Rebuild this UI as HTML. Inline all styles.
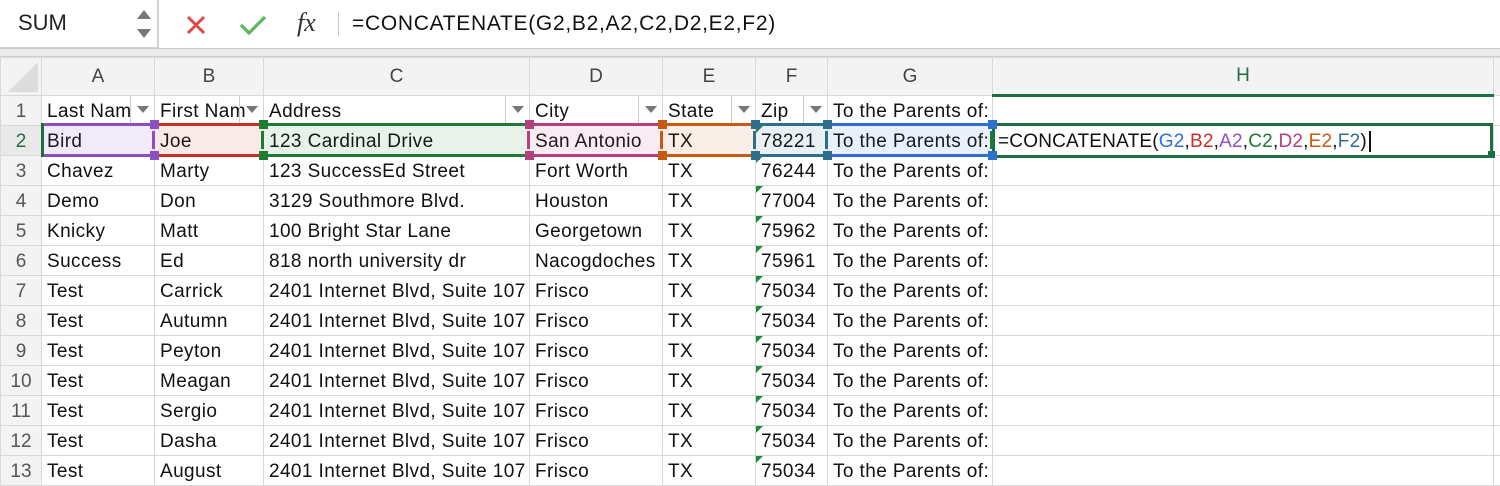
<!DOCTYPE html>
<html><head><meta charset="utf-8"><style>
*{margin:0;padding:0;box-sizing:border-box}
body{width:1500px;height:484px;overflow:hidden;background:#fff;font-family:"Liberation Sans",Arial,sans-serif;position:relative}
.a{position:absolute}
#fb{left:0;top:0;width:1500px;height:49px;background:#fff;border-bottom:1px solid #c8c8c8}
#band{left:0;top:49px;width:1500px;height:8px;background:#ececec;border-bottom:1px solid #cfcfcf}
table{position:absolute;left:0;top:57px;width:1513px;border-collapse:collapse;table-layout:fixed;font-size:19px;letter-spacing:.4px}
td{border:1px solid #d6d6d6;height:30px;padding:3px 0 0 5px;white-space:nowrap;overflow:hidden;color:#111;line-height:26px;position:relative}
tr.h td{height:38px;background:#f3f3f3;color:#444;text-align:center;padding:0;border-color:#d9d9d9;letter-spacing:0}
td.r{background:#f3f3f3;color:#555;text-align:center;padding:3px 0 0 0;border-color:#d9d9d9;letter-spacing:0}
.dd{position:absolute;right:0;top:0;width:24px;height:28px;border-left:1px solid #ccc}
.dd:after{content:"";position:absolute;left:6px;top:10px;border-left:6px solid transparent;border-right:6px solid transparent;border-top:7px solid #777}
.tri{position:absolute;left:0;top:0;width:0;height:0;border-top:7px solid #1c8a3a;border-right:7px solid transparent}
.box{position:absolute;top:123px;height:34px;border-top:3px solid;border-bottom:3px solid}
.sq{position:absolute;width:9px;height:9px}
</style></head><body>
<div id="fb" class="a">
 <div class="a" style="left:0;top:0;width:159px;height:48px;border-right:2px solid #d0d0d0;border-bottom:1px solid #d0d0d0"></div>
 <div class="a" style="left:18px;top:10px;font-size:22px;color:#222">SUM</div>
 <div class="a" style="left:137px;top:10px;border-left:7px solid transparent;border-right:7px solid transparent;border-bottom:9px solid #777"></div>
 <div class="a" style="left:137px;top:29px;border-left:7px solid transparent;border-right:7px solid transparent;border-top:9px solid #777"></div>
 <svg class="a" style="left:185px;top:14px" width="22" height="22"><path d="M3 3L19 19M19 3L3 19" stroke="#e04848" stroke-width="3"/></svg>
 <svg class="a" style="left:238px;top:13px" width="30" height="24"><path d="M3 12L11 20L27 4" stroke="#5cb85c" stroke-width="3.2" fill="none"/></svg>
 <div class="a" style="left:297px;top:8px;font-family:'Liberation Serif',serif;font-style:italic;font-size:26px;color:#333">fx</div>
 <div class="a" style="left:338px;top:12px;width:1px;height:24px;background:#ccc"></div>
 <div class="a" style="left:352px;top:12px;font-size:21px;letter-spacing:.7px;color:#111">=CONCATENATE(G2,B2,A2,C2,D2,E2,F2)</div>
</div>
<div id="band" class="a"></div>
<table>
<colgroup><col style="width:41px"><col style="width:113px"><col style="width:109px"><col style="width:266px"><col style="width:133px"><col style="width:93px"><col style="width:72px"><col style="width:165px"><col style="width:501px"><col style="width:20px"></colgroup>
<tr class="h"><td style="position:relative"><div class="a" style="right:3px;bottom:3px;width:0;height:0;border-left:30px solid transparent;border-bottom:30px solid #dcdcdc"></div></td><td>A</td><td>B</td><td>C</td><td>D</td><td>E</td><td>F</td><td>G</td><td style="color:#1e6e42;border-bottom:3px solid #1e6e42">H</td><td></td></tr>
<tr><td class="r">1</td><td>Last Nam<span class="dd"></span></td><td>First Nam<span class="dd"></span></td><td>Address<span class="dd"></span></td><td>City<span class="dd"></span></td><td>State<span class="dd"></span></td><td>Zip<span class="dd"></span></td><td>To the Parents of:</td><td></td><td></td></tr>
<tr><td class="r" style="color:#1e6e42;background:#e9e9e9">2</td><td>Bird</td><td>Joe</td><td>123 Cardinal Drive</td><td>San Antonio</td><td>TX</td><td><span class="tri"></span>78221</td><td>To the Parents of:</td><td style="padding-left:5px;letter-spacing:.2px">=CONCATENATE(<span style="color:#2f6fd0">G2</span>,<span style="color:#c9302c">B2</span>,<span style="color:#8a4fc4">A2</span>,<span style="color:#1e7b32">C2</span>,<span style="color:#b5407f">D2</span>,<span style="color:#c55a11">E2</span>,<span style="color:#2e6f8e">F2</span>)<span style="border-left:2px solid #111;margin-left:2px"></span></td><td></td></tr>
<tr><td class="r">3</td><td>Chavez</td><td>Marty</td><td>123 SuccessEd Street</td><td>Fort Worth</td><td>TX</td><td><span class="tri"></span>76244</td><td>To the Parents of:</td><td></td><td></td></tr>
<tr><td class="r">4</td><td>Demo</td><td>Don</td><td>3129 Southmore Blvd.</td><td>Houston</td><td>TX</td><td><span class="tri"></span>77004</td><td>To the Parents of:</td><td></td><td></td></tr>
<tr><td class="r">5</td><td>Knicky</td><td>Matt</td><td>100 Bright Star Lane</td><td>Georgetown</td><td>TX</td><td><span class="tri"></span>75962</td><td>To the Parents of:</td><td></td><td></td></tr>
<tr><td class="r">6</td><td>Success</td><td>Ed</td><td>818 north university dr</td><td>Nacogdoches</td><td>TX</td><td><span class="tri"></span>75961</td><td>To the Parents of:</td><td></td><td></td></tr>
<tr><td class="r">7</td><td>Test</td><td>Carrick</td><td>2401 Internet Blvd, Suite 107</td><td>Frisco</td><td>TX</td><td><span class="tri"></span>75034</td><td>To the Parents of:</td><td></td><td></td></tr>
<tr><td class="r">8</td><td>Test</td><td>Autumn</td><td>2401 Internet Blvd, Suite 107</td><td>Frisco</td><td>TX</td><td><span class="tri"></span>75034</td><td>To the Parents of:</td><td></td><td></td></tr>
<tr><td class="r">9</td><td>Test</td><td>Peyton</td><td>2401 Internet Blvd, Suite 107</td><td>Frisco</td><td>TX</td><td><span class="tri"></span>75034</td><td>To the Parents of:</td><td></td><td></td></tr>
<tr><td class="r">10</td><td>Test</td><td>Meagan</td><td>2401 Internet Blvd, Suite 107</td><td>Frisco</td><td>TX</td><td><span class="tri"></span>75034</td><td>To the Parents of:</td><td></td><td></td></tr>
<tr><td class="r">11</td><td>Test</td><td>Sergio</td><td>2401 Internet Blvd, Suite 107</td><td>Frisco</td><td>TX</td><td><span class="tri"></span>75034</td><td>To the Parents of:</td><td></td><td></td></tr>
<tr><td class="r">12</td><td>Test</td><td>Dasha</td><td>2401 Internet Blvd, Suite 107</td><td>Frisco</td><td>TX</td><td><span class="tri"></span>75034</td><td>To the Parents of:</td><td></td><td></td></tr>
<tr><td class="r">13</td><td>Test</td><td>August</td><td>2401 Internet Blvd, Suite 107</td><td>Frisco</td><td>TX</td><td><span class="tri"></span>75034</td><td>To the Parents of:</td><td></td><td></td></tr>
</table>
<div class="box" style="left:44px;width:110px;border-color:#8a4fc4;background:rgba(138,79,196,.12)"></div>
<div class="box" style="left:155px;width:108px;border-color:#c9302c;background:rgba(201,48,44,.1)"></div>
<div class="box" style="left:264px;width:265px;border-color:#1e7b32;background:rgba(30,123,50,.1)"></div>
<div class="box" style="left:530px;width:132px;border-color:#b5407f;background:rgba(181,64,127,.1)"></div>
<div class="box" style="left:663px;width:92px;border-color:#c55a11;background:rgba(197,90,17,.1)"></div>
<div class="box" style="left:756px;width:71px;border-color:#2e6f8e;background:rgba(46,111,142,.1)"></div>
<div class="box" style="left:828px;width:164px;border-color:#2f6fd0;background:rgba(47,111,208,.1)"></div>
<div class="box" style="left:992px;width:501px;border:3px solid #1e6e42;top:123px;height:35px"></div>
<div class="a" style="left:41px;top:123px;width:3px;height:34px;background:#1e6e42"></div>
<div class="sq" style="left:150px;top:120px;background:#8a4fc4"></div><div class="sq" style="left:150px;top:151px;background:#8a4fc4"></div>
<div class="a" style="left:152px;top:131px;width:3px;height:18px;background:#8a4fc4"></div>
<div class="sq" style="left:259px;top:120px;background:#1e7b32"></div><div class="sq" style="left:259px;top:151px;background:#1e7b32"></div>
<div class="a" style="left:261px;top:131px;width:3px;height:18px;background:#1e7b32"></div>
<div class="sq" style="left:525px;top:120px;background:#b5407f"></div><div class="sq" style="left:525px;top:151px;background:#b5407f"></div>
<div class="a" style="left:527px;top:131px;width:3px;height:18px;background:#b5407f"></div>
<div class="sq" style="left:658px;top:120px;background:#c55a11"></div><div class="sq" style="left:658px;top:151px;background:#c55a11"></div>
<div class="a" style="left:660px;top:131px;width:3px;height:18px;background:#c55a11"></div>
<div class="sq" style="left:751px;top:120px;background:#2e6f8e"></div><div class="sq" style="left:751px;top:151px;background:#2e6f8e"></div>
<div class="a" style="left:753px;top:131px;width:3px;height:18px;background:#2e6f8e"></div>
<div class="sq" style="left:823px;top:120px;background:#2e6f8e"></div><div class="sq" style="left:823px;top:151px;background:#2e6f8e"></div>
<div class="a" style="left:825px;top:131px;width:3px;height:18px;background:#2e6f8e"></div>
<div class="sq" style="left:988px;top:120px;background:#2f6fd0"></div><div class="sq" style="left:988px;top:151px;background:#2f6fd0"></div>
<div class="a" style="left:990px;top:131px;width:3px;height:18px;background:#1e7b32"></div>
<div class="sq" style="left:1488px;top:151px;width:7px;height:7px;background:#1e6e42"></div>
</body></html>
